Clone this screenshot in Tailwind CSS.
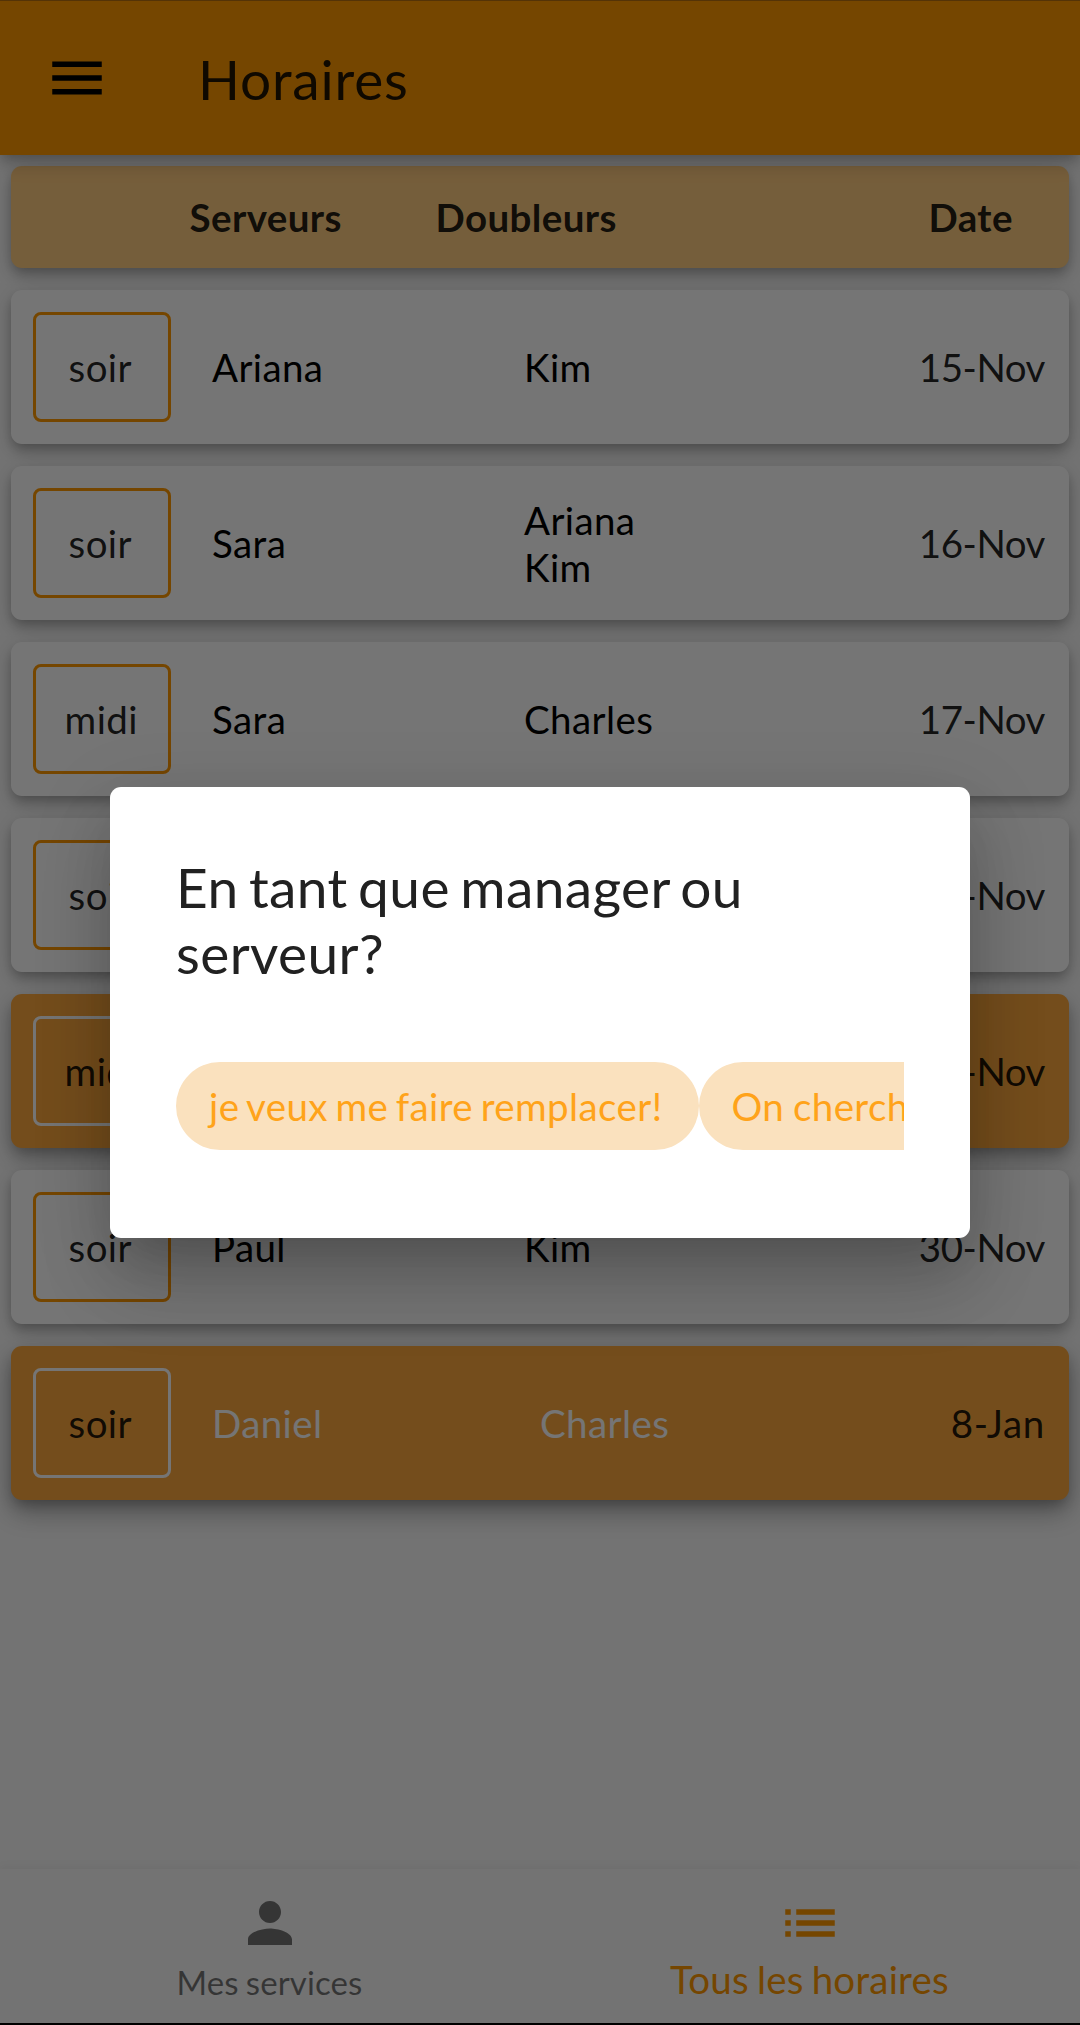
<!DOCTYPE html>
<html lang="fr">
<head>
<meta charset="utf-8">
<title>Horaires</title>
<script src="https://cdn.jsdelivr.net/npm/@tailwindcss/browser@4"></script>
</head>
<body class="bg-black">
<div class="relative w-[1080px] h-[2025px] overflow-hidden bg-black font-['Lato',sans-serif] text-[38.5px] leading-[47px] tracking-[0.4px] text-black/87">
  <div class="flex h-[2023px] flex-col bg-[#fafafa]">
    <header class="relative z-10 flex h-[155px] shrink-0 items-center border-t border-[#b87010] bg-[#ff9800] pl-[44px] shadow-[0_5px_11px_-3px_rgba(0,0,0,0.2),0_11px_14px_rgba(0,0,0,0.10),0_3px_27px_rgba(0,0,0,0.1)]">
      <svg class="size-[66px] text-black" viewBox="0 0 24 24" fill="currentColor"><path d="M3 18h18v-2H3v2zm0-5h18v-2H3v2zm0-7v2h18V6H3z"/></svg>
      <h1 class="ml-[88px] mt-[2px] text-[55px] leading-[66px] tracking-[0.8px]">Horaires</h1>
    </header>

    <main class="flex grow flex-col gap-[22px] p-[11px]">
      <div class="flex h-[102px] items-center rounded-[11px] bg-[#ffcc80] pl-[178.5px] font-bold shadow-[0_5px_11px_-3px_rgba(0,0,0,0.2),0_9px_14px_rgba(0,0,0,0.14),0_3px_24px_rgba(0,0,0,0.12)]">
        <span class="w-[246px]">Serveurs</span>
        <span class="w-[493px]">Doubleurs</span>
        <span>Date</span>
      </div>

      <div class="flex h-[154px] items-center rounded-[11px] bg-white px-[22px] shadow-[0_5px_11px_-3px_rgba(0,0,0,0.2),0_9px_14px_rgba(0,0,0,0.14),0_3px_24px_rgba(0,0,0,0.12)]">
        <span class="flex h-[110px] w-[137.5px] items-center justify-center rounded-[8px] border-[3px] border-[#ff9800] pr-[3px]">soir</span>
        <span class="ml-[41.5px] w-[312px] text-black">Ariana</span>
        <span class="text-black">Kim</span>
        <span class="ml-auto mr-[2px] tracking-[-0.45px]">15-Nov</span>
      </div>
      <div class="flex h-[154px] items-center rounded-[11px] bg-white px-[22px] shadow-[0_5px_11px_-3px_rgba(0,0,0,0.2),0_9px_14px_rgba(0,0,0,0.14),0_3px_24px_rgba(0,0,0,0.12)]">
        <span class="flex h-[110px] w-[137.5px] items-center justify-center rounded-[8px] border-[3px] border-[#ff9800] pr-[3px]">soir</span>
        <span class="ml-[41.5px] w-[312px] text-black">Sara</span>
        <span class="pt-[2px] text-black">Ariana<br>Kim</span>
        <span class="ml-auto mr-[2px] tracking-[-0.45px]">16-Nov</span>
      </div>
      <div class="flex h-[154px] items-center rounded-[11px] bg-white px-[22px] shadow-[0_5px_11px_-3px_rgba(0,0,0,0.2),0_9px_14px_rgba(0,0,0,0.14),0_3px_24px_rgba(0,0,0,0.12)]">
        <span class="flex h-[110px] w-[137.5px] items-center justify-center rounded-[8px] border-[3px] border-[#ff9800] pr-[1px]">midi</span>
        <span class="ml-[41.5px] w-[312px] text-black">Sara</span>
        <span class="text-black">Charles</span>
        <span class="ml-auto mr-[2px] tracking-[-0.45px]">17-Nov</span>
      </div>
      <div class="flex h-[154px] items-center rounded-[11px] bg-white px-[22px] shadow-[0_5px_11px_-3px_rgba(0,0,0,0.2),0_9px_14px_rgba(0,0,0,0.14),0_3px_24px_rgba(0,0,0,0.12)]">
        <span class="flex h-[110px] w-[137.5px] items-center justify-center rounded-[8px] border-[3px] border-[#ff9800] pr-[3px]">soir</span>
        <span class="ml-auto mr-[2px] tracking-[-0.45px]">-Nov</span>
      </div>
      <div class="flex h-[154px] items-center rounded-[11px] bg-[#fda83d] px-[22px] shadow-[0_7px_13px_-3px_rgba(0,0,0,0.22),0_12px_20px_rgba(0,0,0,0.16),0_5px_28px_rgba(0,0,0,0.12)]">
        <span class="flex h-[110px] w-[137.5px] items-center justify-center rounded-[8px] border-[3px] border-white pr-[1px]">midi</span>
        <span class="ml-auto mr-[2px] tracking-[-0.45px]">-Nov</span>
      </div>
      <div class="flex h-[154px] items-center rounded-[11px] bg-white px-[22px] shadow-[0_5px_11px_-3px_rgba(0,0,0,0.2),0_9px_14px_rgba(0,0,0,0.14),0_3px_24px_rgba(0,0,0,0.12)]">
        <span class="flex h-[110px] w-[137.5px] items-center justify-center rounded-[8px] border-[3px] border-[#ff9800] pr-[3px]">soir</span>
        <span class="ml-[41.5px] w-[312px] text-black">Paul</span>
        <span class="text-black">Kim</span>
        <span class="ml-auto mr-[2px] tracking-[-0.45px]">30-Nov</span>
      </div>
      <div class="flex h-[154px] items-center rounded-[11px] bg-[#fda83d] px-[22px] shadow-[0_7px_13px_-3px_rgba(0,0,0,0.24),0_14px_26px_rgba(0,0,0,0.2),0_6px_30px_rgba(0,0,0,0.14)]">
        <span class="flex h-[110px] w-[137.5px] items-center justify-center rounded-[8px] border-[3px] border-white pr-[3px]">soir</span>
        <span class="ml-[41.5px] w-[328px] text-white">Daniel</span>
        <span class="text-white">Charles</span>
        <span class="ml-auto mr-[2px] tracking-[0.7px]">8-Jan</span>
      </div>
    </main>

    <nav class="grid h-[154px] shrink-0 grid-cols-2 bg-[#fafafa] shadow-[0_-1px_10px_rgba(0,0,0,0.06)]">
      <div class="flex flex-col items-center pt-[21px] text-[33px] leading-[40px] text-black/54">
        <svg class="size-[66px]" viewBox="0 0 24 24" fill="currentColor"><path d="M12 12c2.21 0 4-1.79 4-4s-1.79-4-4-4-4 1.790-4 4 1.790 4 4 4zm0 2c-2.670 0-8 1.340-8 4v2h16v-2c0-2.660-5.330-4-8-4z"/></svg>
        <span class="mt-[6px] pr-[1px] tracking-[0.1px] [word-spacing:-1.5px]">Mes services</span>
      </div>
      <div class="flex flex-col items-center pt-[21px] text-[#ff9800]">
        <svg class="size-[66px]" viewBox="0 0 24 24" fill="currentColor"><path d="M3 13h2v-2H3v2zm0 4h2v-2H3v2zm0-8h2V7H3v2zm4 4h14v-2H7v2zm0 4h14v-2H7v2zM7 7v2h14V7H7z"/></svg>
        <span class="pr-[1px] tracking-[0.2px] [word-spacing:-2px]">Tous les horaires</span>
      </div>
    </nav>
  </div>

  <div class="absolute inset-0 z-20 flex items-center justify-center bg-black/54">
    <div class="h-[451px] w-[860px] rounded-[11px] bg-white px-[66px] pt-[67px] shadow-[0_30px_40px_-19px_rgba(0,0,0,0.12),0_50px_75px_0px_rgba(0,0,0,0.14),0_20px_80px_5px_rgba(0,0,0,0.12)]">
      <h2 class="text-[55px] leading-[66px] text-[#212121] [word-spacing:-4px]">En tant que manager ou serveur?</h2>
      <div class="mt-[76px] flex overflow-hidden whitespace-nowrap text-[#ffa31a]">
        <button class="flex h-[88px] w-[522.5px] shrink-0 items-center rounded-full bg-[#fae1be] pl-[33px] [word-spacing:-2.7px]">je veux me faire remplacer!</button>
        <button class="flex h-[88px] shrink-0 items-center rounded-full bg-[#fae1be] px-[33px] [word-spacing:-1.5px]">On cherche</button>
      </div>
    </div>
  </div>
</div>
</body>
</html>
